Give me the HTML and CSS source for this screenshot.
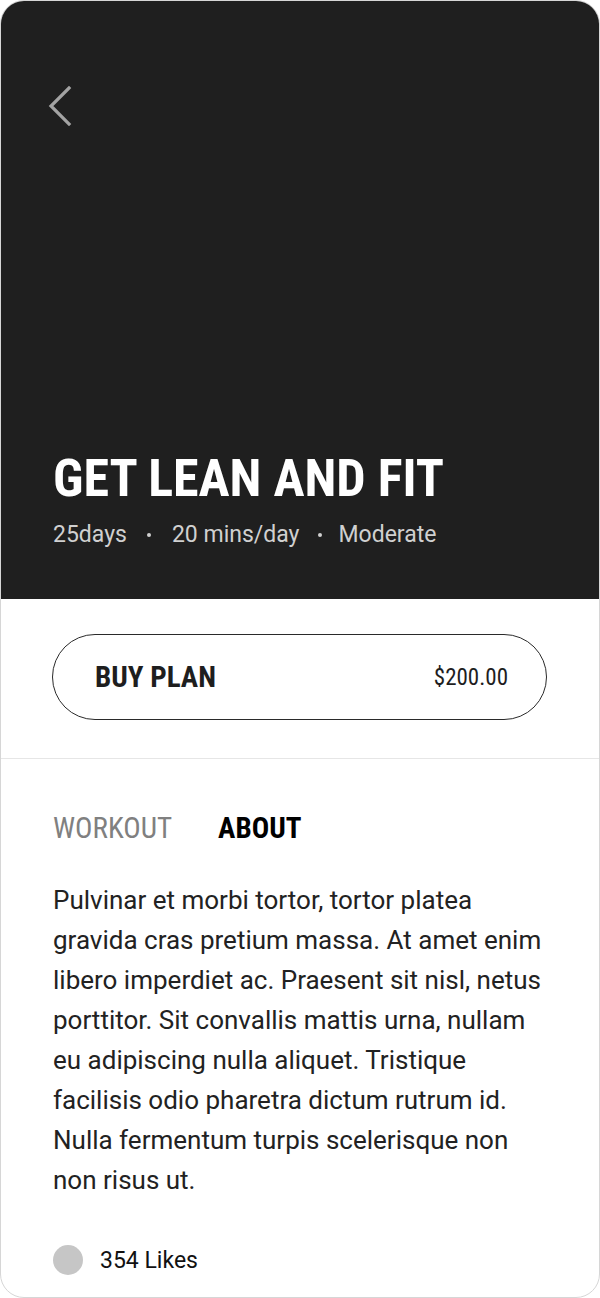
FILE: index.html
```html
<!DOCTYPE html>
<html>
<head>
<meta charset="utf-8">
<link rel="stylesheet" href="styles.css">
</head>
<body>
<div class="card">
  <header class="hero">
    <a class="back" href="#" aria-label="Back">
      <svg width="28" height="40" viewBox="0 0 28 40"><path d="M23 2 L5 20 L23 38" fill="none" stroke="#a3a3a3" stroke-width="3.2" stroke-linecap="square"/></svg>
    </a>
    <div class="hero-text">
      <h1 class="title">GET LEAN AND FIT</h1>
      <div class="meta">
        <span>25days</span><span class="dot dot-first"></span><span>20 mins/day</span><span class="dot dot-second"></span><span>Moderate</span>
      </div>
    </div>
  </header>
  <section class="buy">
    <button class="buy-btn"><span class="buy-label">BUY PLAN</span><span class="buy-price">$200.00</span></button>
  </section>
  <section class="content">
    <nav class="tabs">
      <span class="tab">WORKOUT</span>
      <span class="tab active">ABOUT</span>
    </nav>
    <p class="about">Pulvinar et morbi tortor, tortor platea gravida cras pretium massa. At amet enim libero imperdiet ac. Praesent sit nisl, netus porttitor. Sit convallis mattis urna, nullam eu adipiscing nulla aliquet. Tristique facilisis odio pharetra dictum rutrum id. Nulla fermentum turpis scelerisque non non risus ut.</p>
    <div class="likes">
      <span class="avatar"></span>
      <span class="likes-text">354 Likes</span>
    </div>
  </section>
</div>
</body>
</html>
```
FILE: styles.css
```css
* { box-sizing: border-box; }
html, body { margin: 0; padding: 0; background: #fff; }
body { font-family: Roboto, "Liberation Sans", sans-serif; }

.card {
  width: 600px;
  height: 1298px;
  border: 1px solid #d6d6d6;
  border-radius: 24px;
  overflow: hidden;
  display: flex;
  flex-direction: column;
}

.hero {
  background: #1f1f1f;
  height: 599px;
  margin: -1px -1px 0 -1px;
  padding: 86px 53px 50px 53px;
  display: flex;
  flex-direction: column;
  justify-content: space-between;
}
.back { display: block; width: 28px; height: 40px; margin-left: -7px; }
.back svg { display: block; }

.title {
  margin: 0;
  color: #fff;
  font-family: "Roboto Condensed", Roboto, sans-serif;
  font-weight: 700;
  font-size: 52px;
  line-height: 56px;
}
.meta {
  margin-top: 14px;
  color: #d0d0d0;
  font-size: 23px;
  line-height: 28px;
  display: flex;
  align-items: center;
}
.dot { width: 4px; height: 4px; border-radius: 50%; background: #d0d0d0; }
.dot-first { margin: 0 21px 0 20px; }
.dot-second { margin: 0 17px 0 18px; }

.buy {
  padding: 35px 52px 38px 51px;
  border-bottom: 1px solid #e6e6e6;
}
.buy-btn {
  width: 100%;
  height: 86px;
  border: 1.5px solid #2a2a2a;
  border-radius: 43px;
  background: #fff;
  display: flex;
  align-items: center;
  justify-content: space-between;
  padding: 0 38px 0 42px;
  font-family: "Roboto Condensed", Roboto, sans-serif;
  color: #1e1e1e;
}
.buy-label { font-weight: 700; font-size: 29px; }
.buy-price { font-size: 23px; }

.content { padding: 52px 52px 0 52px; }
.tabs { display: flex; gap: 46px; font-family: "Roboto Condensed", Roboto, sans-serif; font-size: 29px; line-height: 34px; }
.tab { color: #808080; }
.tab.active { color: #000; font-weight: 700; }

.about {
  margin: 35px 0 0 0;
  font-size: 26px;
  line-height: 40px;
  color: #222;
}
.likes { display: flex; align-items: center; gap: 17px; margin-top: 45px; }
.avatar { width: 30px; height: 30px; border-radius: 50%; background: #c6c6c6; }
.likes-text { font-size: 23px; color: #111; }
```
